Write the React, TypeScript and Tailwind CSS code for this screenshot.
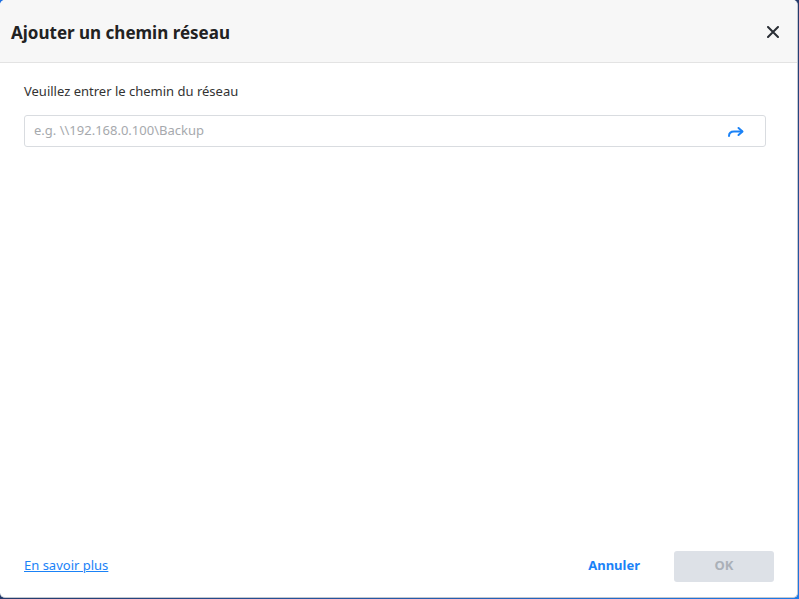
export default function App() {
  return (
    <div className="w-[799px] h-[599px] bg-gradient-to-br from-[#1d6fe0] via-[#253a6b] to-[#1c7ae8] overflow-hidden">
      <div
        className="w-[798px] h-[598px] bg-white rounded-[5px] border-r border-b border-[#c3c8d0] flex flex-col overflow-hidden text-[#333]"
        style={{ fontFamily: '"Noto Sans", "Open Sans", sans-serif' }}
      >
        <div className="h-[63px] shrink-0 bg-[#f7f7f7] border-b border-[#e3e3e3] flex items-center justify-between pl-[11px] pr-[14px]">
          <h1 className="text-[17px] font-bold text-[#222] pt-[4px]">Ajouter un chemin réseau</h1>
          <button className="w-[20px] h-[20px] flex items-center justify-center mt-[2px]">
            <svg width="12" height="12" viewBox="0 0 12 12">
              <path d="M1 1L11 11M11 1L1 11" stroke="#2a2e35" strokeWidth="2" strokeLinecap="round" />
            </svg>
          </button>
        </div>

        <div className="flex-1 px-[24px] pt-[19px]">
          <p className="text-[13px] leading-[18px]">Veuillez entrer le chemin du réseau</p>
          <div className="mt-[15px] w-[742px] h-[32px] border border-[#d9dce0] rounded-[3px] flex items-center pl-[9px] pr-[20px]">
            <input
              className="flex-1 text-[13px] outline-none placeholder:text-[#a6a9ad] bg-transparent"
              placeholder="e.g. \\192.168.0.100\Backup"
            />
            <svg width="18" height="12" viewBox="0 0 18 12" className="mt-[1px]">
              <path d="M2 10C2 7 4 5.5 7 5.5H15" stroke="#1a82f7" strokeWidth="2" fill="none" strokeLinecap="round" />
              <path d="M11.5 2L15.5 5.5L11.5 9" stroke="#1a82f7" strokeWidth="2" fill="none" strokeLinecap="round" strokeLinejoin="round" />
            </svg>
          </div>
        </div>

        <div className="h-[61px] shrink-0 flex items-center justify-between pl-[24px] pr-[23px] pb-[1px]">
          <a href="#" className="text-[13px] text-[#1a82f7] underline">En savoir plus</a>
          <div className="flex items-center gap-[34px]">
            <button className="text-[13px] font-bold text-[#1a82f7]">Annuler</button>
            <button className="w-[100px] h-[31px] rounded-[3px] bg-[#dde1e7] text-[13px] font-bold text-[#aab0b8]">OK</button>
          </div>
        </div>
      </div>
    </div>
  );
}
